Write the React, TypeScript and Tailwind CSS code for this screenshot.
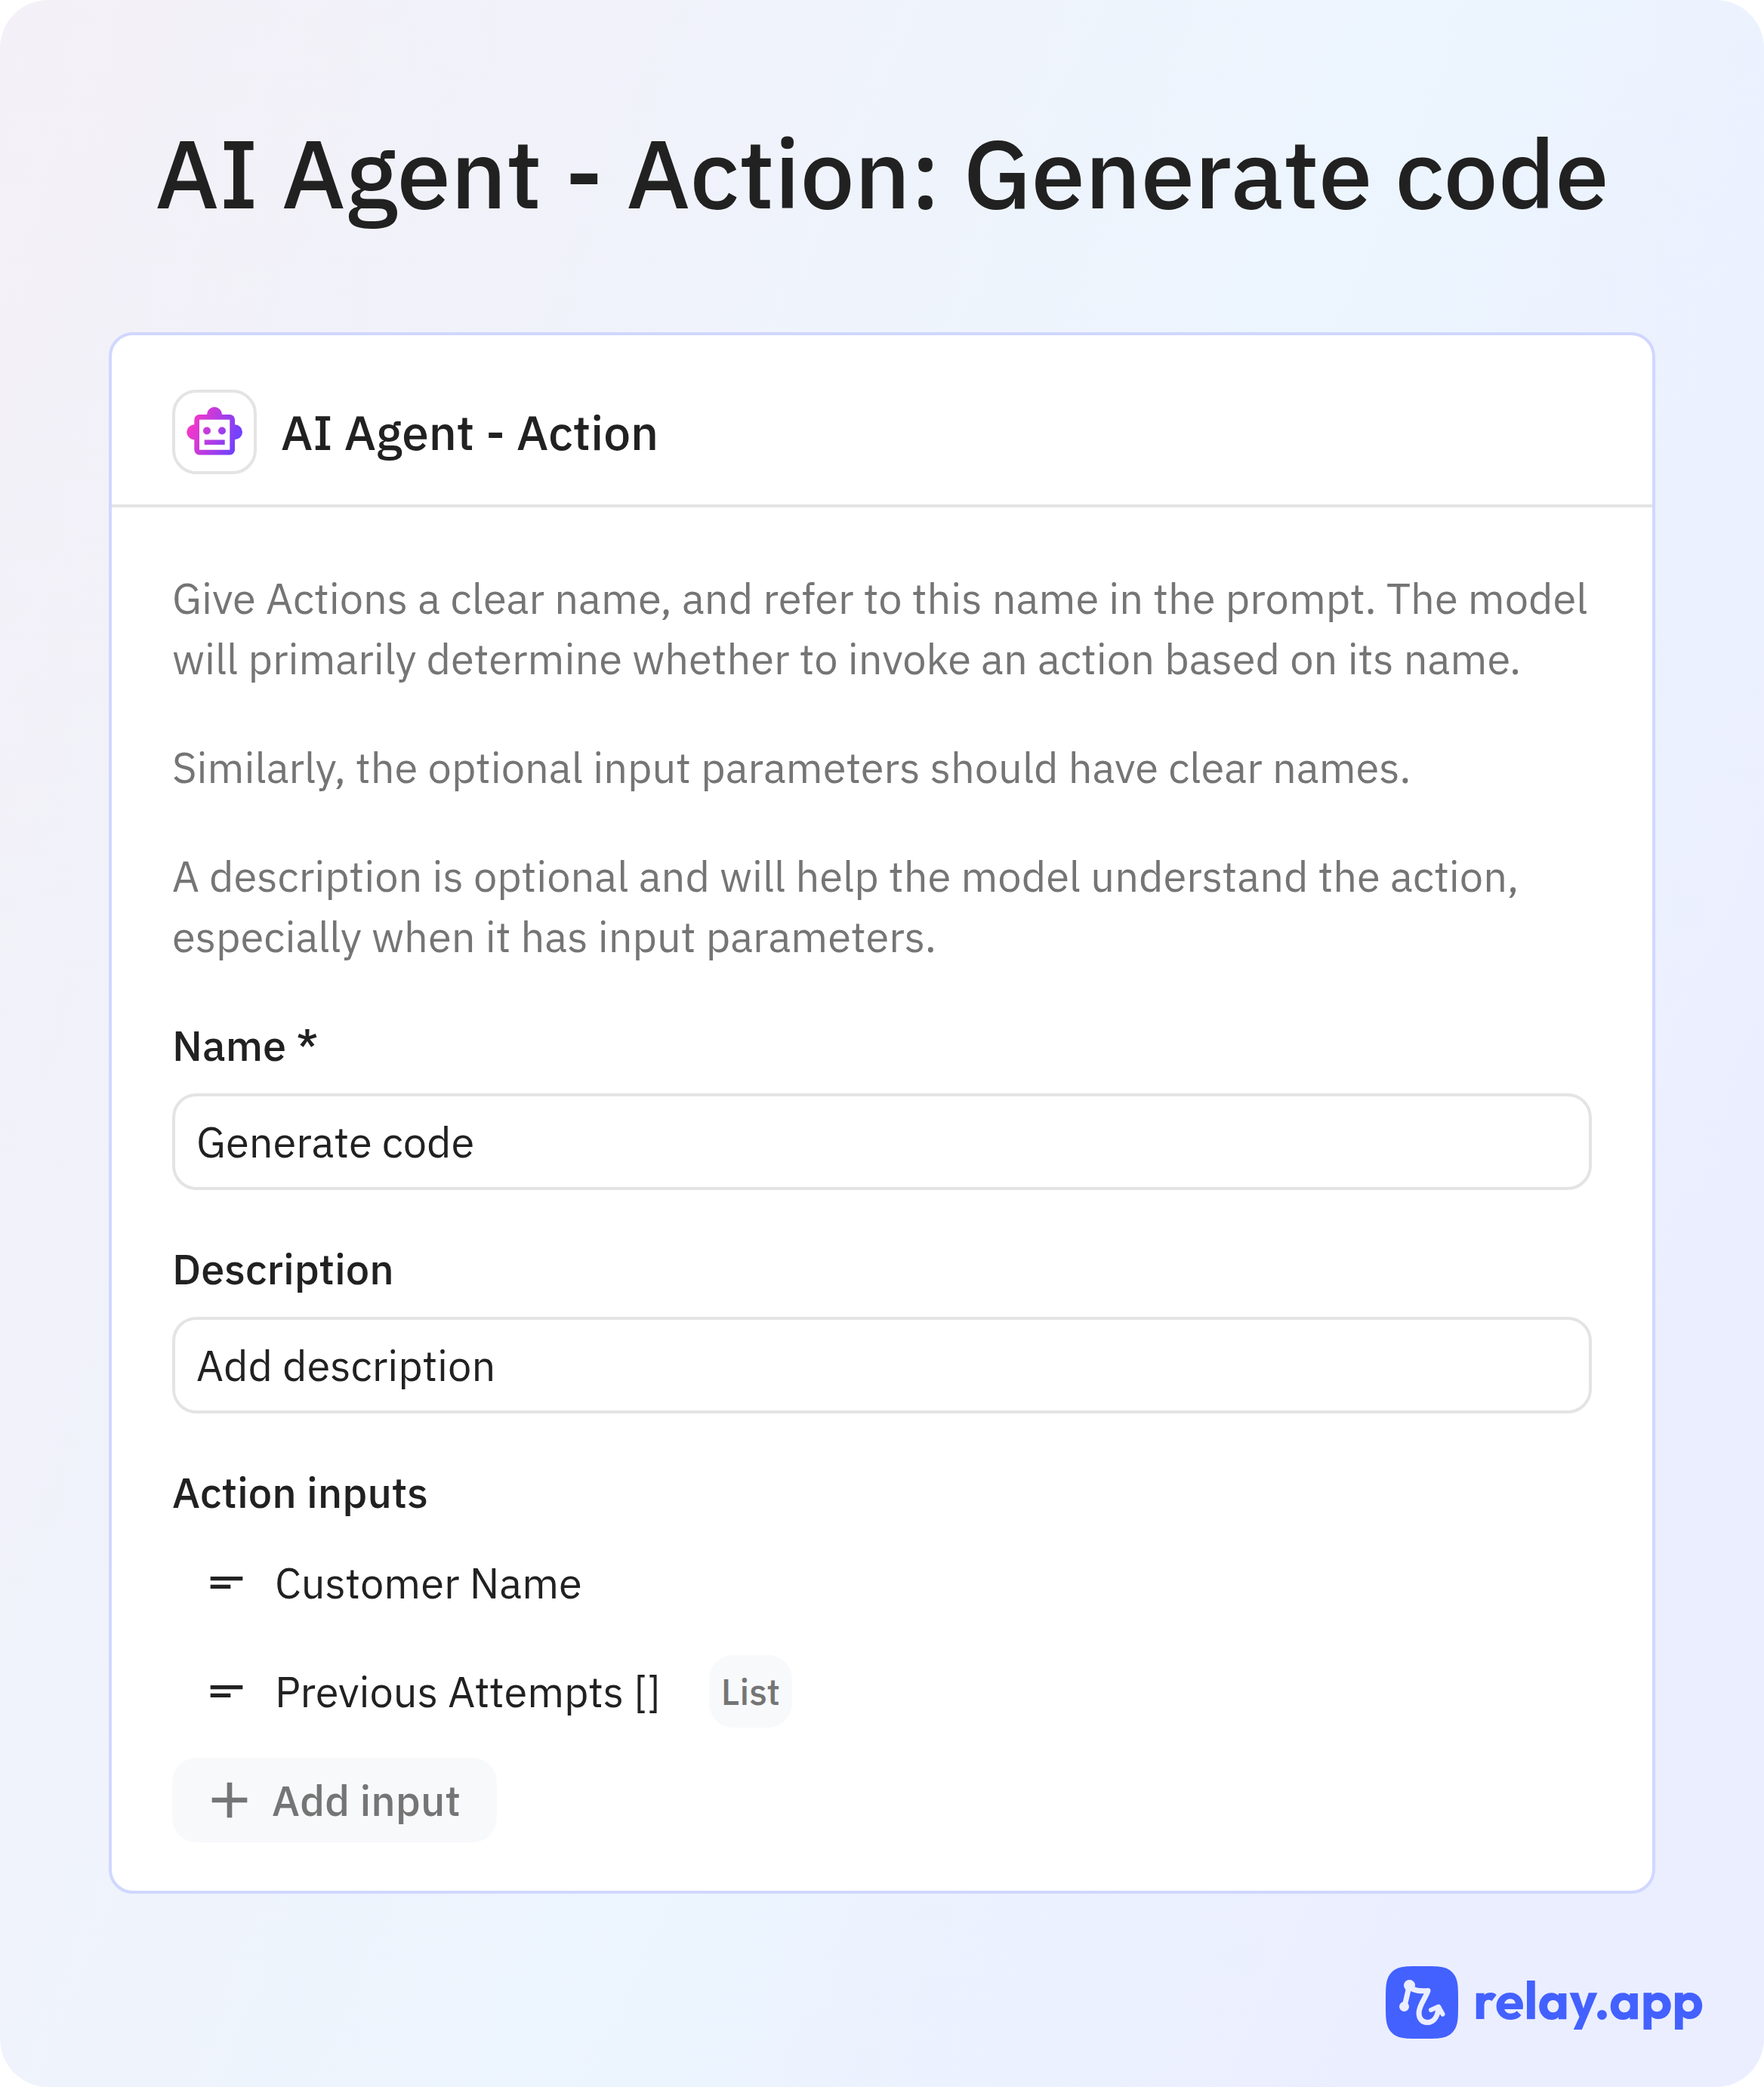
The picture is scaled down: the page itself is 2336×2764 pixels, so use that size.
import { useState } from 'react';

type FieldProps = {
  id: string;
  label: string;
  initial: string;
};

const RobotIcon = () => (
  <svg viewBox="0 0 112 112" className="-m-1 size-28" aria-hidden="true">
    <defs>
      <linearGradient id="robot" x1="24" y1="44" x2="88" y2="68" gradientUnits="userSpaceOnUse">
        <stop offset="0" stopColor="#f637c8" />
        <stop offset="1" stopColor="#6d42ff" />
      </linearGradient>
    </defs>
    <path
      fill="url(#robot)"
      fillRule="evenodd"
      d="M46 33a10 10 0 0 1 20 0h10.300a6.700 6.700 0 0 1 6.700 6.700V46.300a10 10 0 0 1 0 20v13.400a6.700 6.700 0 0 1-6.700 6.700H36a6.700 6.700 0 0 1-6.700-6.700V66.300a10 10 0 0 1 0-20V39.700A6.700 6.700 0 0 1 36 33ZM36 39.700v40h40.300v-40Z"
    />
    <circle cx="46" cy="54.500" r="5" fill="url(#robot)" />
    <circle cx="66" cy="54.500" r="5" fill="url(#robot)" />
    <path d="M42.700 66.500h27v6.500h-27z" fill="url(#robot)" />
  </svg>
);

const TextIcon = () => (
  <svg viewBox="0 0 24 24" className="size-16 shrink-0" fill="currentColor" aria-hidden="true">
    <path d="M4 9h16v2H4zM4 13h10v2H4z" />
  </svg>
);

const PlusIcon = () => (
  <svg viewBox="0 0 24 24" className="size-20 shrink-0" fill="currentColor" aria-hidden="true">
    <path d="M19 13h-6v6h-2v-6H5v-2h6V5h2v6h6z" />
  </svg>
);

const RelayMark = () => (
  <svg viewBox="0 0 96 96" className="size-24 shrink-0" aria-hidden="true">
    <path
      fill="#4361ff"
      d="M48 0C62 0 70 0 76 1.500C86 4 92 10 94.500 20C96 27 96 34 96 48S96 69 94.500 76C92 86 86 92 76 94.500C70 96 62 96 48 96S26 96 20 94.500C10 92 4 86 1.500 76C0 69 0 62 0 48S0 27 1.500 20C4 10 10 4 20 1.500C26 0 34 0 48 0Z"
    />
    <g stroke="#ebeeff" fill="none" strokeLinecap="round" strokeLinejoin="round">
      <path strokeWidth="7" d="M25 53L31 27C37 33 46 33 56 32.500C53 42 44 52 44 62C44 70 49 74.500 55 74.500C64 74.500 69 66 70 55" />
      <path strokeWidth="6" d="M60 58L70 53.500L75.500 63.500" />
    </g>
    <circle cx="31.500" cy="25.500" r="7.500" fill="#ebeeff" />
    <circle cx="24.500" cy="53.500" r="6.500" fill="#ebeeff" />
  </svg>
);

const Field = ({ id, label, initial }: FieldProps) => {
  const [value, setValue] = useState(initial);

  return (
    <div className="flex flex-col gap-6">
      <label htmlFor={id} className="font-medium">
        {label}
      </label>
      <input
        id={id}
        type="text"
        value={value}
        onChange={(e) => setValue(e.target.value)}
        className="h-32 w-full rounded-[32px] border-4 border-[#e4e4e4] bg-white px-7 outline-none"
      />
    </div>
  );
};

const App = () => {
  return (
    <main className="flex flex-col rounded-[64px] bg-[linear-gradient(113deg,#f4f0f7_0%,#ecf5fe_56%,#ebeeff_84%)] px-36 pt-35 pb-16 font-['IBM_Plex_Sans','Roboto',sans-serif] text-[#212121]">
      <h1 className="text-center text-[128px] leading-[176px] font-medium">AI Agent - Action: Generate code</h1>

      <section className="mt-31 rounded-[32px] border-4 border-[#d0d7ff] bg-white">
        <header className="flex items-center gap-8 border-b-4 border-[#e4e4e4] px-20 pt-18 pb-10">
          <div className="size-28 shrink-0 rounded-[32px] border-4 border-[#e4e4e4]">
            <RobotIcon />
          </div>
          <h2 className="text-[64px] leading-[80px] font-medium">AI Agent - Action</h2>
        </header>

        <div className="flex flex-col gap-16 px-20 pt-20 pb-16 text-[56px] leading-[80px]">
          <div className="flex flex-col gap-16 text-[#757575]">
            <p>
              Give Actions a clear name, and refer to this name in the prompt. The model will primarily determine whether
              to invoke an action based on its name.
            </p>
            <p>Similarly, the optional input parameters should have clear names.</p>
            <p>
              A description is optional and will help the model understand the action, especially when it has input
              parameters.
            </p>
          </div>

          <Field id="name" label="Name *" initial="Generate code" />
          <Field id="description" label="Description" initial="Add description" />

          <div className="flex flex-col items-start">
            <h3 className="font-medium">Action inputs</h3>
            <ul className="mt-8 flex flex-col gap-12 pl-10">
              <li className="flex h-24 items-center gap-8">
                <TextIcon />
                Customer Name
              </li>
              <li className="flex h-24 items-center gap-8">
                <TextIcon />
                Previous Attempts []
                <span className="ml-8 flex h-24 items-center rounded-[32px] bg-[#f8f9fb] px-4 text-[48px] font-medium text-[#757575]">
                  List
                </span>
              </li>
            </ul>
            <button
              type="button"
              className="mt-10 flex h-28 items-center gap-4 rounded-[32px] bg-[#f8f9fb] pr-12 pl-9 font-medium text-[#757575]"
            >
              <PlusIcon />
              Add input
            </button>
          </div>
        </div>
      </section>

      <footer className="-mr-16 mt-24 flex items-center justify-end gap-5 text-[#4361ff]">
        <RelayMark />
        <span className="pb-2 font-['Outfit','Lato',sans-serif] text-[70px] leading-[80px] font-bold">relay.app</span>
      </footer>
    </main>
  );
};

export default App;
